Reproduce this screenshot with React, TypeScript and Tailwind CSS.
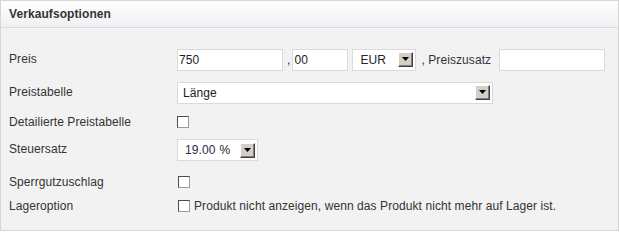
import React from "react";

function ArrowButton({ className = "" }: { className?: string }) {
  return (
    <span
      className={`flex items-center justify-center w-[15px] h-[15px] bg-[#d4d0c8] border border-t-white border-l-white border-r-[#404040] border-b-[#404040] shadow-[inset_-1px_-1px_0_#808080] ${className}`}
    >
      <svg width="7" height="4" viewBox="0 0 7 4" className="mb-[1px]">
        <path d="M0 0h7L3.5 4z" fill="#000" />
      </svg>
    </span>
  );
}

function FakeSelect({
  value,
  width,
  pl = "pl-[7px]",
}: {
  value: React.ReactNode;
  width: string;
  pl?: string;
}) {
  return (
    <div
      className={`flex items-center justify-between h-[22px] bg-white border border-[#dadada] ${width} ${pl} pr-[2px]`}
    >
      <span className="text-[12px] text-[#222]">{value}</span>
      <ArrowButton />
    </div>
  );
}

function TextBox({ value = "", width }: { value?: string; width: string }) {
  return (
    <div
      className={`flex items-center h-[22px] bg-white border border-[#dadada] pl-[1px] text-[12px] text-[#222] ${width}`}
    >
      {value}
    </div>
  );
}

function CheckBox() {
  return (
    <span className="inline-block w-[12px] h-[12px] bg-white border border-t-[#4d4d4d] border-l-[#4d4d4d] border-r-[#9a9a9a] border-b-[#9a9a9a]" />
  );
}

function Row({
  label,
  height,
  raise = true,
  children,
}: {
  label: string;
  height: string;
  raise?: boolean;
  children: React.ReactNode;
}) {
  return (
    <div className={`flex items-center ${height}`}>
      <div className={`w-[168px] text-[12px] text-[#333] ${raise ? "-mt-[2px]" : ""}`}>
        {label}
      </div>
      <div className="flex items-center">{children}</div>
    </div>
  );
}

export default function App() {
  return (
    <div
      className="w-[619px] h-[231px] border border-[#d6d6d6] bg-[#f2f2f2] flex flex-col tracking-[0.08px]"
      style={{ fontFamily: '"Liberation Sans", Arial, sans-serif' }}
    >
      {/* Kopfzeile */}
      <div className="h-[27px] flex items-center pl-[8px] bg-gradient-to-b from-white to-[#eef0f3] border-b border-[#d9d9d9]">
        <span className="text-[12px] font-bold text-[#333]">Verkaufsoptionen</span>
      </div>

      <div className="pl-[8px] pt-[16px]">
        <Row label="Preis" height="h-[31px]">
          <TextBox value="750" width="w-[106px]" />
          <span className="text-[12px] text-[#333] ml-[4px] mr-[2px]">,</span>
          <TextBox value="00" width="w-[56px]" />
          <div className="ml-[4px]">
            <FakeSelect value="EUR" width="w-[64px]" />
          </div>
          <span className="text-[12px] text-[#333] ml-[5px]">, Preiszusatz</span>
          <div className="ml-[8px]">
            <TextBox width="w-[106px]" />
          </div>
        </Row>

        <Row label="Preistabelle" height="h-[35px]">
          <FakeSelect value="Länge" width="w-[316px]" pl="pl-[5px]" />
        </Row>

        <Row label="Detailierte Preistabelle" height="h-[24px]" raise={false}>
          <CheckBox />
        </Row>

        <Row label="Steuersatz" height="h-[32px]">
          <FakeSelect
            value={
              <>
                <span className="text-[#2a2a4a]">19.00</span>
                <span className="ml-[4px]">%</span>
              </>
            }
            width="w-[81px]"
          />
        </Row>

        <Row label="Sperrgutzuschlag" height="h-[31px]" raise={false}>
          <span className="ml-[1px] flex">
            <CheckBox />
          </span>
        </Row>

        <Row label="Lageroption" height="h-[17px]" raise={false}>
          <span className="ml-[1px] flex items-center">
            <CheckBox />
            <span className="ml-[4px] text-[12px] text-[#333]">
              Produkt nicht anzeigen, wenn das Produkt nicht mehr auf Lager ist.
            </span>
          </span>
        </Row>
      </div>
    </div>
  );
}
